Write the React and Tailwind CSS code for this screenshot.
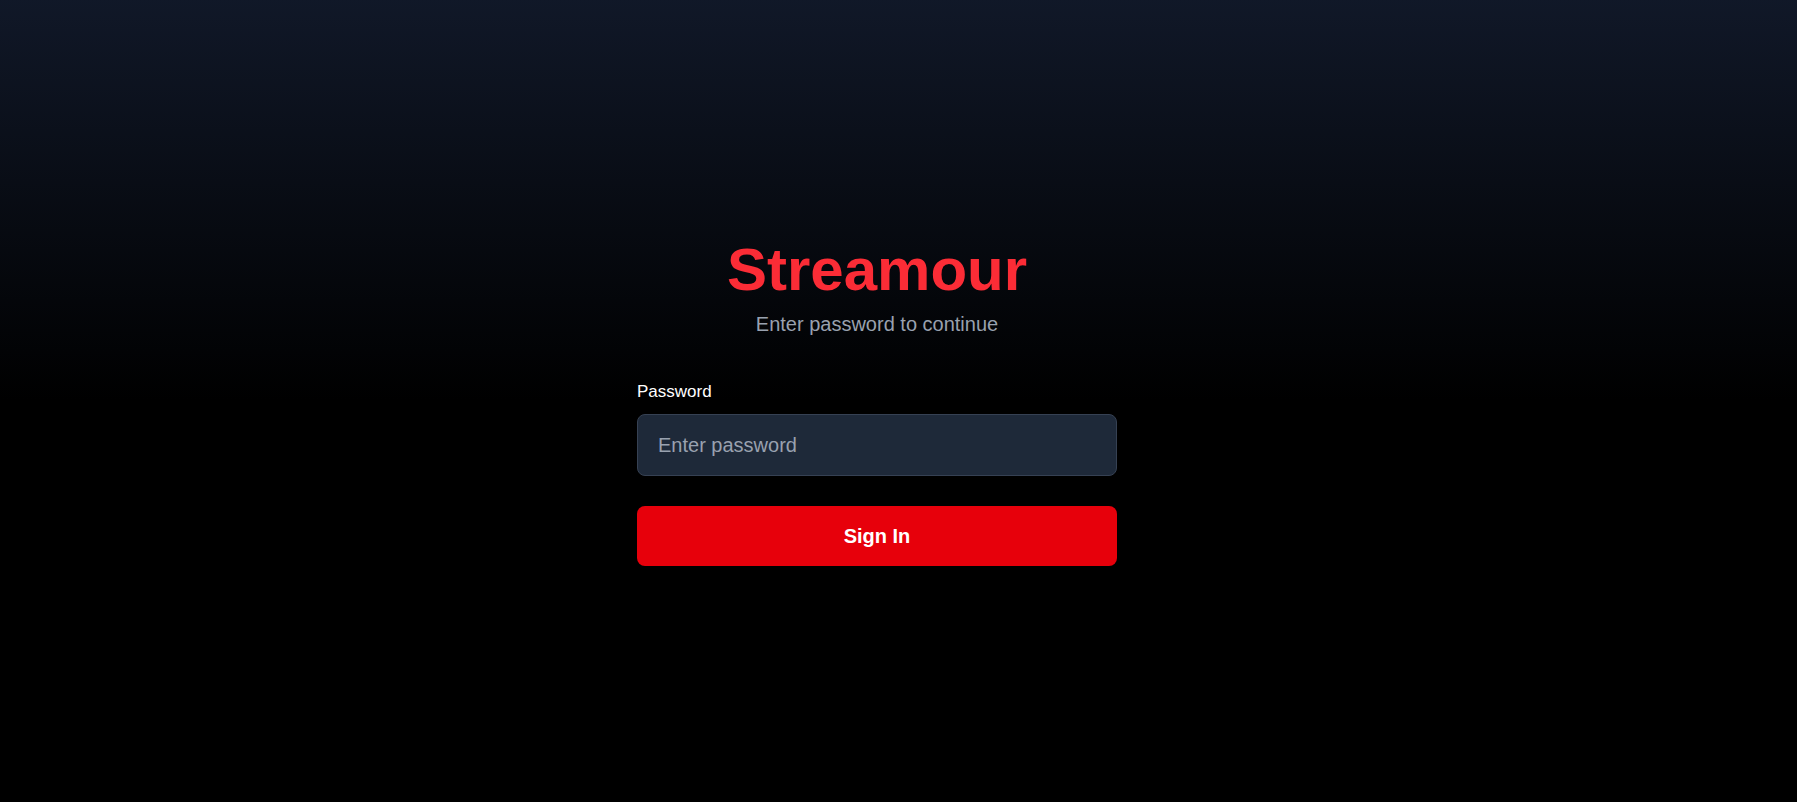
import { useState } from "react";

export default function App() {
  const [password, setPassword] = useState("");

  return (
    <div
      className="min-h-screen w-full bg-linear-to-b/srgb from-gray-900 via-black to-black flex items-center justify-center pr-[43px]"
      style={{ fontFamily: '"Liberation Sans", Arial, sans-serif' }}
    >
      <div className="w-[480px]">
        <div className="text-center">
          <h1 className="text-6xl leading-[68px] font-bold text-red-500 mb-[6px]">Streamour</h1>
          <p className="text-xl text-gray-400">Enter password to continue</p>
        </div>

        <form className="mt-[42px]" onSubmit={(e) => e.preventDefault()}>
          <label htmlFor="password" className="block text-[17px] leading-6 text-white mb-[10px]">
            Password
          </label>
          <input
            id="password"
            type="password"
            value={password}
            onChange={(e) => setPassword(e.target.value)}
            placeholder="Enter password"
            className="w-full px-5 py-4 text-xl bg-gray-800 border border-gray-700 rounded-lg text-white placeholder-gray-400 outline-none"
          />
          <button
            type="submit"
            className="w-full mt-[30px] py-4 text-xl font-bold text-white bg-red-600 rounded-lg"
          >
            Sign In
          </button>
        </form>
      </div>
    </div>
  );
}
